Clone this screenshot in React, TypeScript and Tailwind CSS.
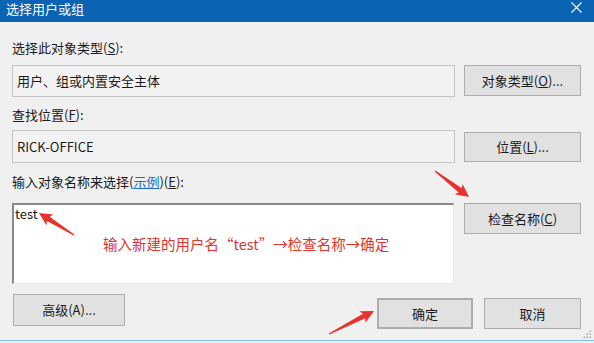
import React from "react";

function Arrow({ x1, y1, x2, y2 }: { x1: number; y1: number; x2: number; y2: number }) {
  const dx = x2 - x1;
  const dy = y2 - y1;
  const L = Math.sqrt(dx * dx + dy * dy);
  const a = (Math.atan2(dy, dx) * 180) / Math.PI;
  const d = `M0,-0.6 L${L - 11},-2.6 L${L - 13},-6.5 L${L},0 L${L - 13},6.5 L${L - 11},2.6 L0,0.6 Z`;
  return <path d={d} fill="#e8322b" transform={`translate(${x1} ${y1}) rotate(${a})`} />;
}

function Btn({ children, className = "" }: { children: React.ReactNode; className?: string }) {
  return (
    <div
      className={`flex items-center justify-center bg-[#e1e1e1] border border-[#adadad] text-[13px] leading-[16px] text-[#1a1a1a] ${className}`}
    >
      {children}
    </div>
  );
}

export default function App() {
  return (
    <div className="relative w-[594px] h-[343px] bg-[#f0f0f0] overflow-hidden font-['Noto_Sans_CJK_SC','Noto_Sans',sans-serif] text-[#1a1a1a]">
      {/* title bar */}
      <div className="h-[22px] bg-[#0b63b4] flex items-start justify-between pl-[6px] pr-[12px]">
        <span className="text-white text-[13px] leading-[15px] mt-[1px]">选择用户或组</span>
        <svg width="11" height="11" viewBox="0 0 11 11" className="mt-[2px]">
          <path d="M0.5 0.5 L10.5 10.5 M10.5 0.5 L0.5 10.5" stroke="#ffffff" strokeWidth="1.1" />
        </svg>
      </div>

      <div className="px-[12px] pr-[13px] flex flex-col">
        {/* section 1 */}
        <div className="mt-[17px] h-[18px] text-[13px] leading-[18px]">
          选择此对象类型(<span className="underline">S</span>):
        </div>
        <div className="mt-[8px] flex gap-[9px] items-start">
          <div className="w-[443px] h-[32px] border border-[#c4c4c4] bg-[#f2f2f2] flex items-center pl-[4px] text-[13px]">
            用户、组或内置安全主体
          </div>
          <Btn className="w-[117px] h-[31px]">
            对象类型(<span className="underline">O</span>)...
          </Btn>
        </div>

        {/* section 2 */}
        <div className="mt-[9px] h-[18px] text-[13px] leading-[18px]">
          查找位置(<span className="underline">F</span>):
        </div>
        <div className="mt-[6px] flex gap-[9px] items-center">
          <div className="w-[443px] h-[33px] border border-[#c4c4c4] bg-[#f2f2f2] flex items-center pl-[4px] text-[13px]">
            RICK-OFFICE
          </div>
          <Btn className="w-[117px] h-[30px]">
            位置(<span className="underline">L</span>)...
          </Btn>
        </div>

        {/* section 3 */}
        <div className="mt-[10px] h-[18px] text-[13px] leading-[18px]">
          输入对象名称来选择(<span className="underline text-[#1a6fc4]">示例</span>)(
          <span className="underline">E</span>):
        </div>
        <div className="mt-[12px] flex gap-[10px] items-start">
          <div className="w-[442px] h-[81px] bg-white border-t-2 border-l-2 border-t-[#8a8a8a] border-l-[#8a8a8a] border-r border-b border-r-[#e6e6e6] border-b-[#e6e6e6] relative">
            <div className="pl-[1px] pt-[1px] text-[13px] leading-[16px]">test</div>
            <div className="mt-[13px] pl-[89px] text-[14.5px] leading-[18px] text-[#e0342c] whitespace-nowrap">
              输入新建的用户名“test”→检查名称→确定
            </div>
          </div>
          <Btn className="w-[117px] h-[31px]">
            检查名称(<span className="underline">C</span>)
          </Btn>
        </div>

        {/* bottom buttons */}
        <div className="flex justify-between">
          <Btn className="mt-[10px] ml-[1px] w-[112px] h-[32px]">高级(A)...</Btn>
          <div className="mt-[14px] flex gap-[11px]">
            <Btn className="w-[96px] h-[31px] border-2 border-[#2a7bd1]">确定</Btn>
            <Btn className="w-[97px] h-[31px]">取消</Btn>
          </div>
        </div>
      </div>

      {/* bottom window line */}
      <div className="absolute left-0 right-0 top-[340px] h-[1px] bg-[#8cbbe9]" />

      {/* size grip */}
      <svg className="absolute right-[2px] top-[329px]" width="10" height="10" viewBox="0 0 10 10">
        {[
          [8, 2],
          [8, 5],
          [5, 5],
          [8, 8],
          [5, 8],
          [2, 8],
        ].map(([x, y], i) => (
          <rect key={i} x={x - 0.5} y={y - 0.5} width="1.5" height="1.5" fill="#a0a0a0" />
        ))}
      </svg>

      {/* annotation arrows */}
      <svg className="absolute left-0 top-0 pointer-events-none" width="594" height="343">
        <Arrow x1={74} y1={235} x2={39} y2={213} />
        <Arrow x1={435} y1={171} x2={469} y2={197} />
        <Arrow x1={329} y1={334} x2={374} y2={311} />
      </svg>
    </div>
  );
}
